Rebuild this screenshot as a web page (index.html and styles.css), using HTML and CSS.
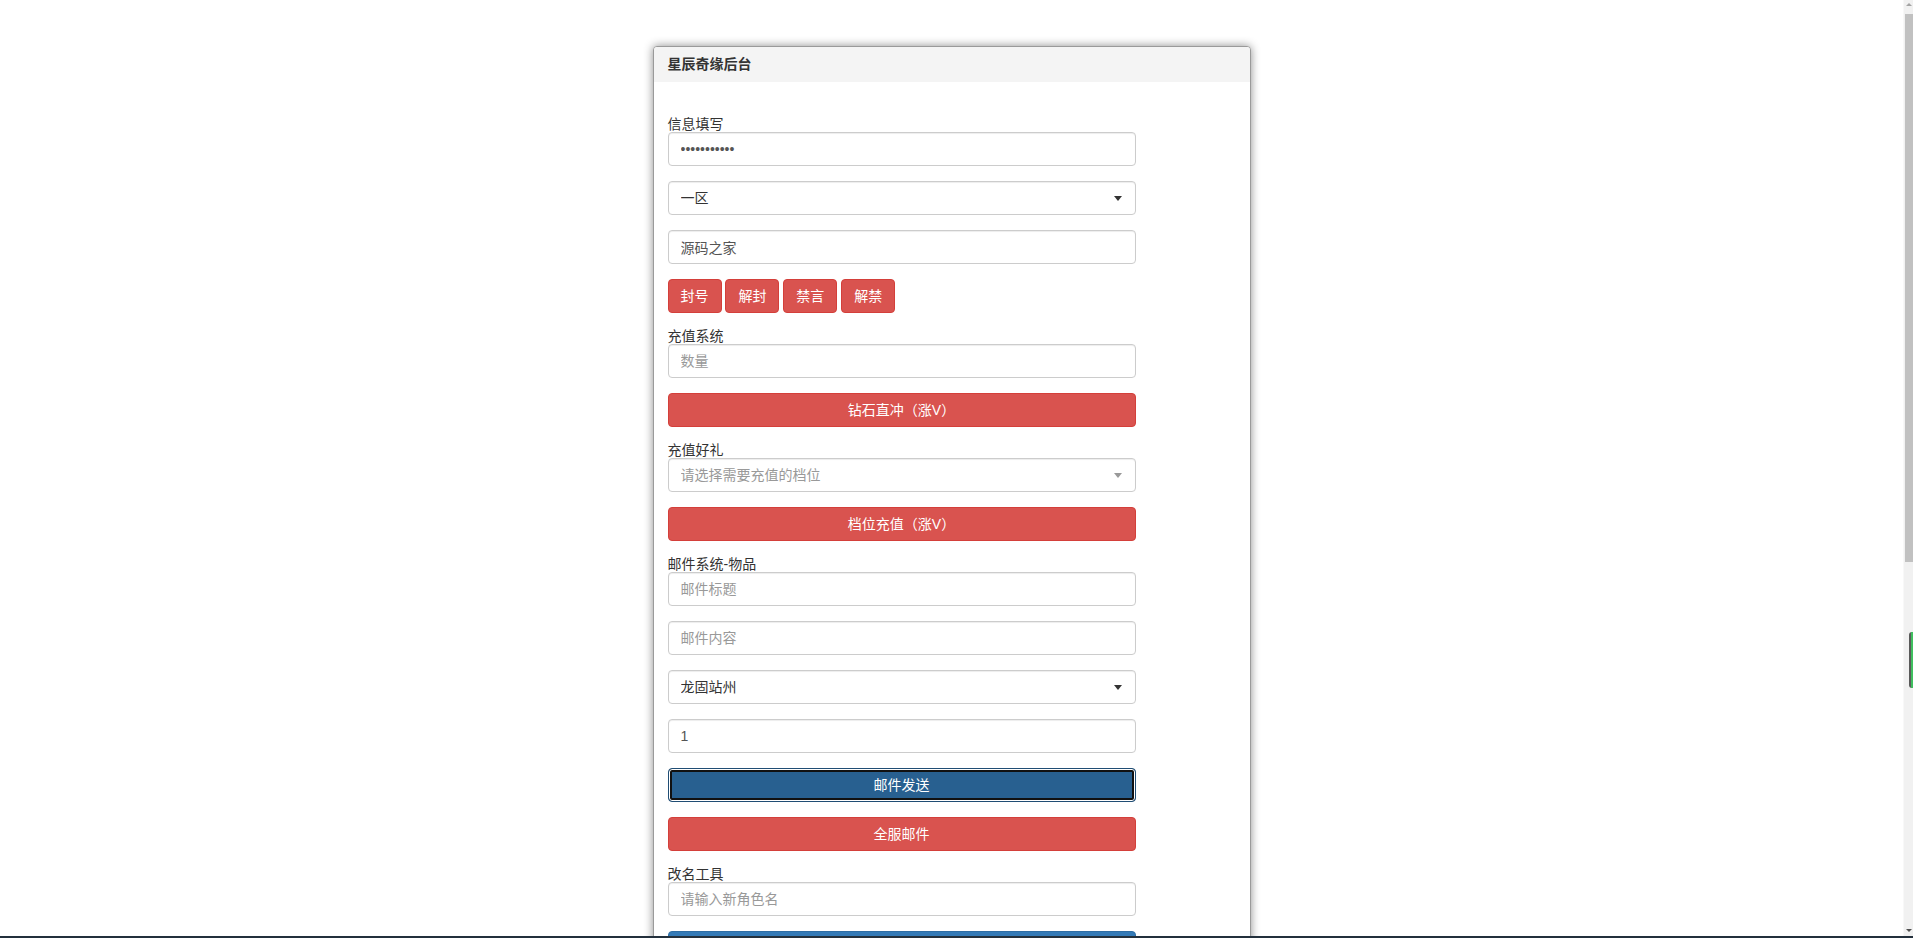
FILE: index.html
```
<!DOCTYPE html>
<html lang="zh-CN">
<head>
    <meta charset="UTF-8">
    <meta name="viewport" content="width=device-width, initial-scale=1.0">
    <title>星辰奇缘后台</title>
    <link rel="stylesheet" href="styles.css">
</head>
<body>
    <div class="panel">
        <div class="panel-heading">星辰奇缘后台</div>
        <div class="panel-body">
            <form class="gm-form">
                <div class="form-group">
                    <label>信息填写</label>
                    <input type="password" class="form-control" value="12345678901">
                </div>
                <div class="form-group select-wrap">
                    <select class="form-control">
                        <option>一区</option>
                        <option>二区</option>
                    </select>
                </div>
                <div class="form-group">
                    <input type="text" class="form-control" value="源码之家">
                </div>
                <div class="form-group btn-row">
                    <button type="button" class="btn btn-danger">封号</button>
                    <button type="button" class="btn btn-danger">解封</button>
                    <button type="button" class="btn btn-danger">禁言</button>
                    <button type="button" class="btn btn-danger">解禁</button>
                </div>

                <div class="form-group">
                    <label>充值系统</label>
                    <input type="text" class="form-control" placeholder="数量">
                </div>
                <div class="form-group">
                    <button type="button" class="btn btn-danger btn-block">钻石直冲（涨V）</button>
                </div>

                <div class="form-group">
                    <label>充值好礼</label>
                    <div class="select-wrap placeholder">
                        <select class="form-control">
                            <option>请选择需要充值的档位</option>
                            <option>6元档</option>
                            <option>30元档</option>
                        </select>
                    </div>
                </div>
                <div class="form-group">
                    <button type="button" class="btn btn-danger btn-block">档位充值（涨V）</button>
                </div>

                <div class="form-group">
                    <label>邮件系统-物品</label>
                    <input type="text" class="form-control" placeholder="邮件标题">
                </div>
                <div class="form-group">
                    <input type="text" class="form-control" placeholder="邮件内容">
                </div>
                <div class="form-group select-wrap">
                    <select class="form-control">
                        <option>龙固站州</option>
                    </select>
                </div>
                <div class="form-group">
                    <input type="text" class="form-control" value="1">
                </div>
                <div class="form-group">
                    <button type="button" class="btn btn-primary btn-block focused">邮件发送</button>
                </div>
                <div class="form-group">
                    <button type="button" class="btn btn-danger btn-block">全服邮件</button>
                </div>

                <div class="form-group">
                    <label>改名工具</label>
                    <input type="text" class="form-control" placeholder="请输入新角色名">
                </div>
                <div class="form-group">
                    <button type="button" class="btn btn-primary btn-block">确认改名</button>
                </div>

                <div class="form-group">
                    <label>VIP工具</label>
                    <input type="text" class="form-control" placeholder="VIP等级">
                </div>
                <div class="form-group">
                    <button type="button" class="btn btn-danger btn-block">设置VIP</button>
                </div>

                <div class="form-group">
                    <label>玩家查询</label>
                    <input type="text" class="form-control" placeholder="角色ID">
                </div>
                <div class="form-group">
                    <button type="button" class="btn btn-primary btn-block">查询</button>
                </div>

                <div class="form-group">
                    <label>公告系统</label>
                    <input type="text" class="form-control" placeholder="公告内容">
                </div>
                <div class="form-group">
                    <button type="button" class="btn btn-danger btn-block">发布公告</button>
                </div>
            </form>
        </div>
    </div>

    <!-- window chrome seen in the capture -->
    <div class="scrollbar">
        <span class="arrow up"></span>
        <span class="thumb"></span>
        <span class="arrow down"></span>
    </div>
    <div class="side-widget"></div>
    <div class="taskbar-edge"></div>
</body>
</html>
```

FILE: styles.css
```
* {
    box-sizing: border-box;
}
body {
    margin: 0;
    padding-right: 10px;
    font-family: "Liberation Sans", "Noto Sans CJK SC", sans-serif;
    font-size: 14px;
    line-height: 20px;
    color: #333;
    background-color: #fff;
}
.panel {
    width: 598px;
    margin: 46px auto 40px;
    background-color: #fff;
    border: 1px solid #9a9a9a;
    border-radius: 4px;
    box-shadow: 0 0 10px rgba(0, 0, 0, .45);
}
.panel-heading {
    padding: 7px 14px;
    height: 35px;
    line-height: 21px;
    font-weight: bold;
    background-color: #f4f4f4;
    border-radius: 3px 3px 0 0;
}
.panel-body {
    padding: 34px 14px 15px;
}
.gm-form {
    width: 468px;
}
.form-group {
    margin-bottom: 15px;
}
label {
    display: block;
    line-height: 16px;
    font-weight: normal;
}
.form-control {
    display: block;
    width: 100%;
    height: 34px;
    padding: 6px 12px;
    font-family: inherit;
    font-size: 14px;
    line-height: 20px;
    color: #555;
    background-color: #fff;
    border: 1px solid #ccc;
    border-radius: 4px;
    box-shadow: inset 0 1px 1px rgba(0, 0, 0, .075);
}
.form-control::placeholder {
    color: #999;
}
select.form-control {
    appearance: none;
    -webkit-appearance: none;
    color: #333;
}
.select-wrap {
    position: relative;
}
.select-wrap::after {
    content: "";
    position: absolute;
    right: 14px;
    top: 15px;
    border-left: 4px solid transparent;
    border-right: 4px solid transparent;
    border-top: 5px solid #333;
    pointer-events: none;
}
.select-wrap.placeholder select {
    color: #999;
}
.select-wrap.placeholder::after {
    border-top-color: #999;
}
.btn {
    display: inline-block;
    padding: 6px 12px;
    font-family: inherit;
    font-size: 14px;
    line-height: 20px;
    text-align: center;
    color: #fff;
    border: 1px solid transparent;
    border-radius: 4px;
    cursor: pointer;
}
.btn-block {
    display: block;
    width: 100%;
}
.btn-danger {
    background-color: #d9534f;
    border-color: #d43f3a;
}
.btn-primary {
    background-color: #337ab7;
    border-color: #2e6da4;
}
.btn-primary.focused {
    background-color: #286090;
    border-color: #204d74;
    box-shadow: inset 0 0 0 1px #fff, inset 0 0 0 3px #111;
}

/* scrollbar + desktop bits */
.scrollbar {
    position: fixed;
    top: 0;
    right: 0;
    bottom: 2px;
    width: 10px;
    display: flex;
    flex-direction: column;
    align-items: flex-end;
    background-color: #f1f1f1;
    border-left: 1px solid #f8f8f8;
}
.scrollbar .thumb {
    width: 8px;
    height: 548px;
    margin: 8px 0 auto;
    background-color: #c1c1c1;
}
.scrollbar .arrow {
    width: 0;
    height: 0;
    margin: 3px 1px 0 0;
    border-left: 3px solid transparent;
    border-right: 3px solid transparent;
}
.scrollbar .arrow.up {
    border-bottom: 3px solid #a3a3a3;
}
.scrollbar .arrow.down {
    margin: 0 1px 4px 0;
    border-top: 3px solid #505050;
}
.side-widget {
    position: fixed;
    right: 0;
    top: 632px;
    width: 4px;
    height: 56px;
    background-color: #5a5a5a;
    border-radius: 3px 0 0 3px;
    border-right: 2px solid #3fbf5f;
}
.taskbar-edge {
    position: fixed;
    left: 0;
    right: 0;
    bottom: 0;
    height: 2px;
    background-color: #23303c;
}
```
